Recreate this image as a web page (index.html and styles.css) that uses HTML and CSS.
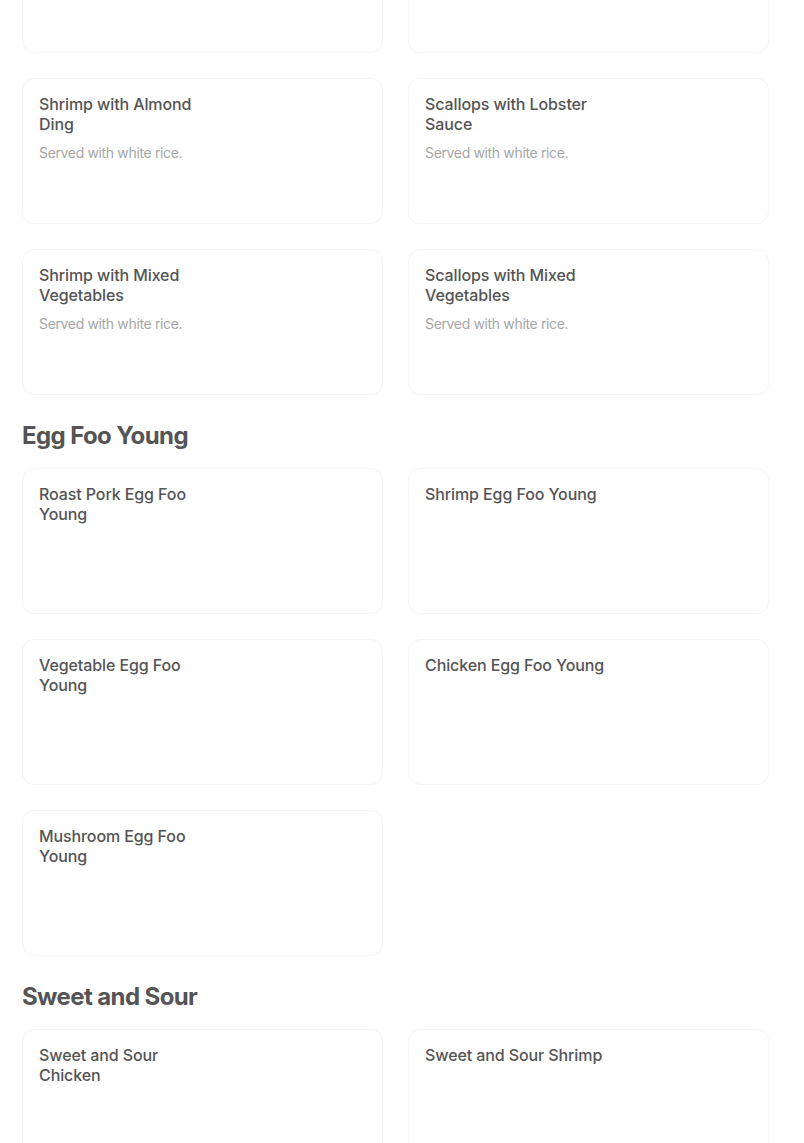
FILE: index.html
```html
<!DOCTYPE html>
<html lang="en">
<head>
<meta charset="utf-8">
<title>Menu</title>
<link rel="stylesheet" href="styles.css">
</head>
<body>
<main class="menu">
  <section class="section section-cont">
    <div class="grid">
      <div class="card"></div>
      <div class="card"></div>
      <div class="card">
        <h3 class="title">Shrimp with Almond Ding</h3>
        <p class="desc">Served with white rice.</p>
      </div>
      <div class="card">
        <h3 class="title">Scallops with Lobster Sauce</h3>
        <p class="desc">Served with white rice.</p>
      </div>
      <div class="card">
        <h3 class="title">Shrimp with Mixed Vegetables</h3>
        <p class="desc">Served with white rice.</p>
      </div>
      <div class="card">
        <h3 class="title">Scallops with Mixed Vegetables</h3>
        <p class="desc">Served with white rice.</p>
      </div>
    </div>
  </section>

  <section class="section">
    <h2 class="heading">Egg Foo Young</h2>
    <div class="grid">
      <div class="card"><h3 class="title">Roast Pork Egg Foo Young</h3></div>
      <div class="card"><h3 class="title">Shrimp Egg Foo Young</h3></div>
      <div class="card"><h3 class="title">Vegetable Egg Foo Young</h3></div>
      <div class="card"><h3 class="title">Chicken Egg Foo Young</h3></div>
      <div class="card"><h3 class="title">Mushroom Egg Foo Young</h3></div>
    </div>
  </section>

  <section class="section">
    <h2 class="heading">Sweet and Sour</h2>
    <div class="grid">
      <div class="card"><h3 class="title">Sweet and Sour Chicken</h3></div>
      <div class="card"><h3 class="title">Sweet and Sour Shrimp</h3></div>
    </div>
  </section>
</main>
</body>
</html>
```

FILE: styles.css
```css
html, body {
  margin: 0;
  padding: 0;
  background: #ffffff;
}

body {
  font-family: Inter, "Noto Sans", Roboto, sans-serif;
  color: #545454;
  overflow: hidden;
}

.menu {
  width: 748px;
  padding-left: 22px;
  margin-top: -93px;
}

.section {
  display: flex;
  flex-direction: column;
}

.section + .section {
  margin-top: 25px;
}

.heading {
  margin: 0 0 16px;
  font-size: 24px;
  line-height: 32px;
  font-weight: 700;
  letter-spacing: -0.6px;
  color: #545454;
}

.grid {
  display: grid;
  grid-template-columns: 361px 361px;
  column-gap: 25px;
  row-gap: 25px;
}

.card {
  box-sizing: border-box;
  height: 146px;
  border: 1px solid #f4f4f4;
  border-radius: 12px;
  padding: 15px 16px;
  background: #fff;
}

.title {
  margin: 0;
  max-width: 182px;
  font-size: 16px;
  line-height: 20px;
  font-weight: 500;
  letter-spacing: -0.1px;
  color: #545454;
}

.desc {
  margin: 9px 0 0;
  font-size: 14px;
  line-height: 20px;
  font-weight: 400;
  letter-spacing: -0.35px;
  color: #a6a6a6;
}
```
